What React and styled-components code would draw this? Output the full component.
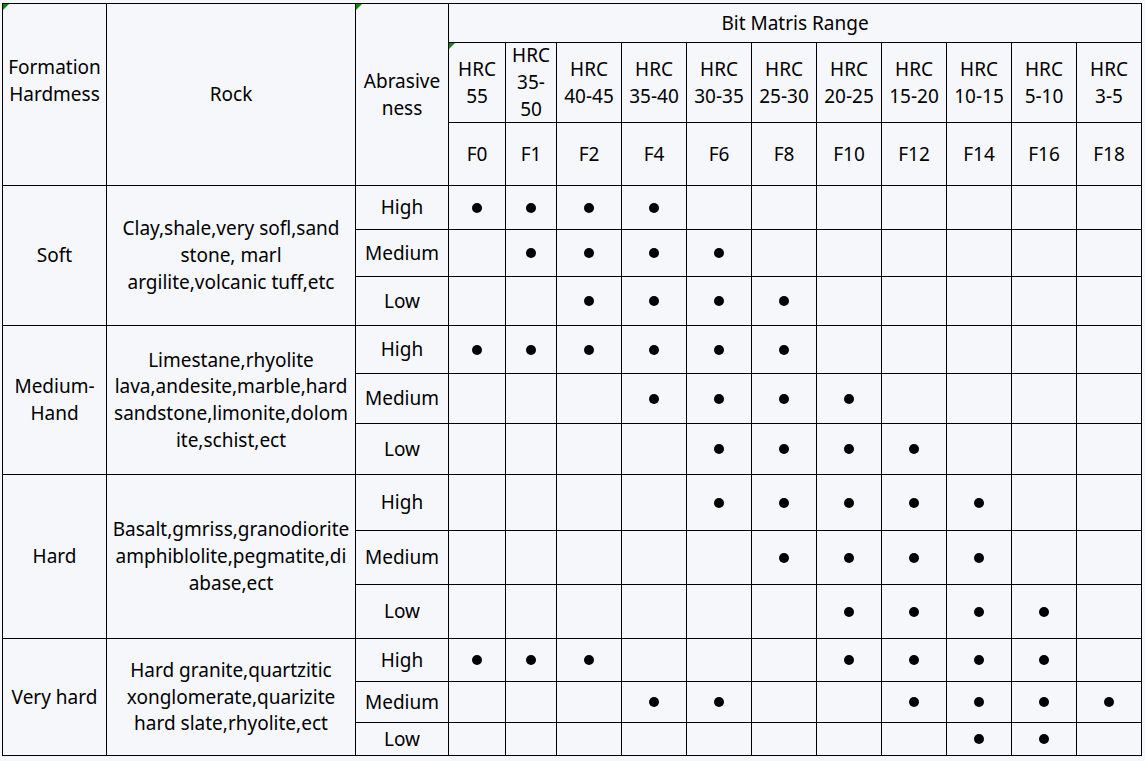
import React from "react";
import styled, { createGlobalStyle } from "styled-components";

const Global = createGlobalStyle`
  html, body { margin: 0; padding: 0; background: #f5f7fb; }
  body { font-family: "Noto Sans", "Open Sans", sans-serif; color: #000; }
`;

const Page = styled.div`
  padding: 3px 0 0 2px;
  width: 1145px;
  height: 761px;
  box-sizing: border-box;
  background: #f5f7fb;
`;

const Grid = styled.div`
  display: grid;
  grid-template-columns: 104px 249px 93px 57px 51px repeat(9, 65px);
  grid-template-rows: 39px 80px 63px 44px 47px 49px 48px 50px 51px 56px 54px 54px 43px 41px 33px;
  width: max-content;
  border-left: 1px solid #000;
  border-top: 1px solid #000;
`;

const Cell = styled.div`
  position: relative;
  box-sizing: border-box;
  border-right: 1px solid #000;
  border-bottom: 1px solid #000;
  display: flex;
  align-items: center;
  justify-content: center;
  text-align: center;
  white-space: nowrap;
  font-size: 19px;
  line-height: 26.7px;
  grid-row: ${(p) => (p.$rows ? `span ${p.$rows}` : "auto")};
  grid-column: ${(p) => (p.$cols ? `span ${p.$cols}` : "auto")};
  padding-bottom: ${(p) => p.$pb || 0}px;
`;

const Flag = styled.span`
  position: absolute;
  left: 0;
  top: 0;
  width: 0;
  height: 0;
  border-top: 6px solid #0a8a0a;
  border-right: 6px solid transparent;
`;

const Dot = styled.span`
  width: 10px;
  height: 10px;
  border-radius: 50%;
  background: #000;
`;

const hrc = ["HRC\n55", "HRC\n35-\n50", "HRC\n40-45", "HRC\n35-40", "HRC\n30-35", "HRC\n25-30", "HRC\n20-25", "HRC\n15-20", "HRC\n10-15", "HRC\n5-10", "HRC\n3-5"];
const fs = ["F0", "F1", "F2", "F4", "F6", "F8", "F10", "F12", "F14", "F16", "F18"];

const groups = [
  {
    name: "Soft",
    rock: "Clay,shale,very sofl,sand\nstone, marl\nargilite,volcanic tuff,etc",
    rows: [
      ["High", [0, 1, 2, 3]],
      ["Medium", [1, 2, 3, 4]],
      ["Low", [2, 3, 4, 5]],
    ],
  },
  {
    name: "Medium-\nHand",
    rock: "Limestane,rhyolite\nlava,andesite,marble,hard\nsandstone,limonite,dolom\nite,schist,ect",
    rows: [
      ["High", [0, 1, 2, 3, 4, 5]],
      ["Medium", [3, 4, 5, 6]],
      ["Low", [4, 5, 6, 7]],
    ],
  },
  {
    name: "Hard",
    rock: "Basalt,gmriss,granodiorite\namphiblolite,pegmatite,di\nabase,ect",
    rows: [
      ["High", [4, 5, 6, 7, 8]],
      ["Medium", [5, 6, 7, 8]],
      ["Low", [6, 7, 8, 9]],
    ],
  },
  {
    name: "Very hard",
    rock: "Hard granite,quartzitic\nxonglomerate,quarizite\nhard slate,rhyolite,ect",
    rows: [
      ["High", [0, 1, 2, 6, 7, 8, 9]],
      ["Medium", [3, 4, 7, 8, 9, 10]],
      ["Low", [8, 9]],
    ],
  },
];

const Lines = ({ text }) =>
  text.split("\n").map((l, i, a) => (
    <React.Fragment key={i}>
      {l}
      {i < a.length - 1 && <br />}
    </React.Fragment>
  ));

export default function App() {
  return (
    <>
      <Global />
      <Page>
        <Grid>
          <Cell $rows={3} $pb={28}>
            <Flag />
            <div><Lines text={"Formation\nHardmess"} /></div>
          </Cell>
          <Cell $rows={3}>Rock</Cell>
          <Cell $rows={3}>
            <Flag />
            <div><Lines text={"Abrasive\nness"} /></div>
          </Cell>
          <Cell $cols={11}>Bit Matris Range</Cell>
          {hrc.map((h, i) => (
            <Cell key={"h" + i}>
              {i === 0 && <Flag />}
              <div><Lines text={h} /></div>
            </Cell>
          ))}
          {fs.map((f) => (
            <Cell key={f}>{f}</Cell>
          ))}
          {groups.map((g) => (
            <React.Fragment key={g.name}>
              <Cell $rows={3}>
                <div><Lines text={g.name} /></div>
              </Cell>
              <Cell $rows={3}>
                <div><Lines text={g.rock} /></div>
              </Cell>
              {g.rows.map(([label, dots]) => (
                <React.Fragment key={label}>
                  <Cell>{label}</Cell>
                  {fs.map((f, i) => (
                    <Cell key={f}>{dots.includes(i) && <Dot />}</Cell>
                  ))}
                </React.Fragment>
              ))}
            </React.Fragment>
          ))}
        </Grid>
      </Page>
    </>
  );
}
